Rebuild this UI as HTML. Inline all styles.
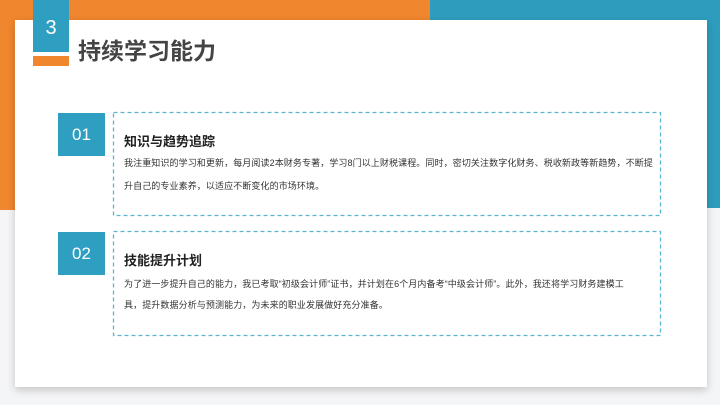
<!DOCTYPE html>
<html><head><meta charset="utf-8"><style>
*{margin:0;padding:0;box-sizing:border-box}
body{width:720px;height:405px;position:relative;overflow:hidden;background:#f4f5f6;font-family:"Liberation Sans","Noto Sans CJK SC",sans-serif}
.a{position:absolute}
.t{font-size:9px;color:#333;letter-spacing:0.1px;white-space:nowrap}
</style></head><body>
<div class="a" style="left:0;top:0;width:440px;height:210px;background:#f0862e"></div>
<div class="a" style="left:430px;top:0;width:290px;height:208px;background:#2e9dbd"></div>
<div class="a" style="left:15px;top:20px;width:692px;height:367px;background:#fff;box-shadow:0 3px 8px rgba(0,0,0,.2)"></div>
<div class="a" style="left:33px;top:0;width:36px;height:52px;background:#2e9fc0;color:#fff;font-size:20px;text-align:center;line-height:56px">3</div>
<div class="a" style="left:33px;top:56px;width:36px;height:10px;background:#f0862e"></div>
<div class="a" style="left:78px;top:32px;font-size:23px;font-weight:bold;color:#444">持续学习能力</div>
<svg class="a" style="left:0;top:0" width="720" height="405">
<rect x="113.5" y="112.5" width="547" height="103" fill="none" stroke="#5bb6d2" stroke-width="1.3" stroke-dasharray="4 3"/>
<rect x="113.5" y="231.5" width="547" height="104" fill="none" stroke="#5bb6d2" stroke-width="1.3" stroke-dasharray="4 3"/>
</svg>
<div class="a" style="left:58px;top:113px;width:47px;height:43px;background:#2e9fc0;color:#fff;font-size:17px;text-align:center;line-height:43px">01</div>
<div class="a" style="left:124px;top:131px;font-size:13px;font-weight:bold;color:#222">知识与趋势追踪</div>
<div class="a t" style="left:124px;top:156px">我注重知识的学习和更新，每月阅读2本财务专著，学习8门以上财税课程。同时，密切关注数字化财务、税收新政等新趋势，不断提</div>
<div class="a t" style="left:124px;top:179px">升自己的专业素养，以适应不断变化的市场环境。</div>

<div class="a" style="left:58px;top:232px;width:47px;height:43px;background:#2e9fc0;color:#fff;font-size:17px;text-align:center;line-height:43px">02</div>
<div class="a" style="left:124px;top:250px;font-size:13px;font-weight:bold;color:#222">技能提升计划</div>
<div class="a t" style="left:124px;top:277px">为了进一步提升自己的能力，我已考取“初级会计师”证书，并计划在6个月内备考“中级会计师”。此外，我还将学习财务建模工</div>
<div class="a t" style="left:124px;top:298px">具，提升数据分析与预测能力，为未来的职业发展做好充分准备。</div>
</body></html>
